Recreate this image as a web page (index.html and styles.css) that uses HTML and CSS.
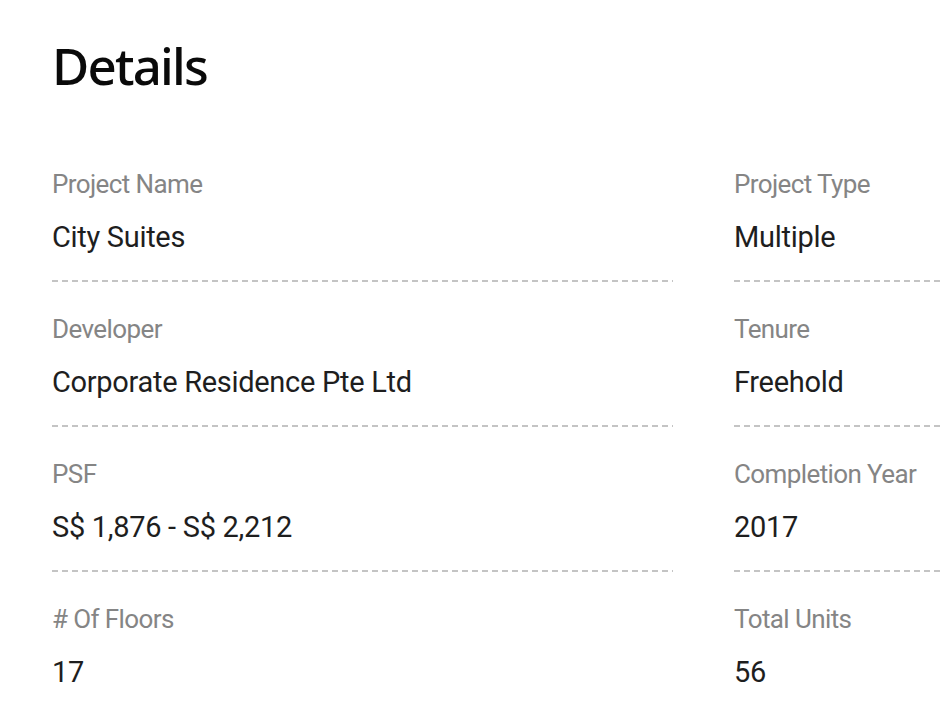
FILE: index.html
```html
<!DOCTYPE html>
<html lang="en">
<head>
    <meta charset="UTF-8">
    <meta name="viewport" content="width=device-width, initial-scale=1.0">
    <title>Details</title>
    <link rel="stylesheet" href="styles.css">
</head>
<body>
    <section class="details">
        <h1 class="details-title">Details</h1>

        <div class="details-grid">
            <div class="detail">
                <div class="detail-label">Project Name</div>
                <div class="detail-value">City Suites</div>
            </div>
            <div class="detail">
                <div class="detail-label">Project Type</div>
                <div class="detail-value">Multiple</div>
            </div>

            <div class="detail">
                <div class="detail-label">Developer</div>
                <div class="detail-value">Corporate Residence Pte Ltd</div>
            </div>
            <div class="detail">
                <div class="detail-label">Tenure</div>
                <div class="detail-value">Freehold</div>
            </div>

            <div class="detail">
                <div class="detail-label">PSF</div>
                <div class="detail-value">S$ 1,876 - S$ 2,212</div>
            </div>
            <div class="detail">
                <div class="detail-label">Completion Year</div>
                <div class="detail-value">2017</div>
            </div>

            <div class="detail">
                <div class="detail-label"># Of Floors</div>
                <div class="detail-value">17</div>
            </div>
            <div class="detail">
                <div class="detail-label">Total Units</div>
                <div class="detail-value">56</div>
            </div>
        </div>
    </section>
</body>
</html>
```

FILE: styles.css
```css
body {
    margin: 0;
    background-color: #fff;
    font-family: Roboto, 'Liberation Sans', sans-serif;
    overflow: hidden;
}

.details {
    padding: 30px 0 0 52px;
}

.details-title {
    margin: 0;
    font-family: 'Noto Sans', sans-serif;
    font-size: 51px;
    font-weight: 500;
    letter-spacing: -1.8px;
    line-height: 70px;
    color: #0a0a0a;
}

.details-grid {
    display: grid;
    grid-template-columns: 621px 621px;
    column-gap: 61px;
    margin-top: 69px;
}

.detail {
    padding-bottom: 28px;
    margin-bottom: 32px;
    background-image: repeating-linear-gradient(to right, #c4c4c4 0 6px, transparent 6px 10px);
    background-size: 100% 2px;
    background-position: left bottom;
    background-repeat: no-repeat;
}

/* last row has no dashed line */
.detail:nth-last-child(-n+2) {
    background-image: none;
}

.detail-label {
    font-size: 26px;
    letter-spacing: -0.6px;
    line-height: 30px;
    color: #858585;
}

.detail-value {
    margin-top: 21px;
    font-size: 29px;
    letter-spacing: -0.3px;
    line-height: 34px;
    color: #1e1e1e;
}
```
